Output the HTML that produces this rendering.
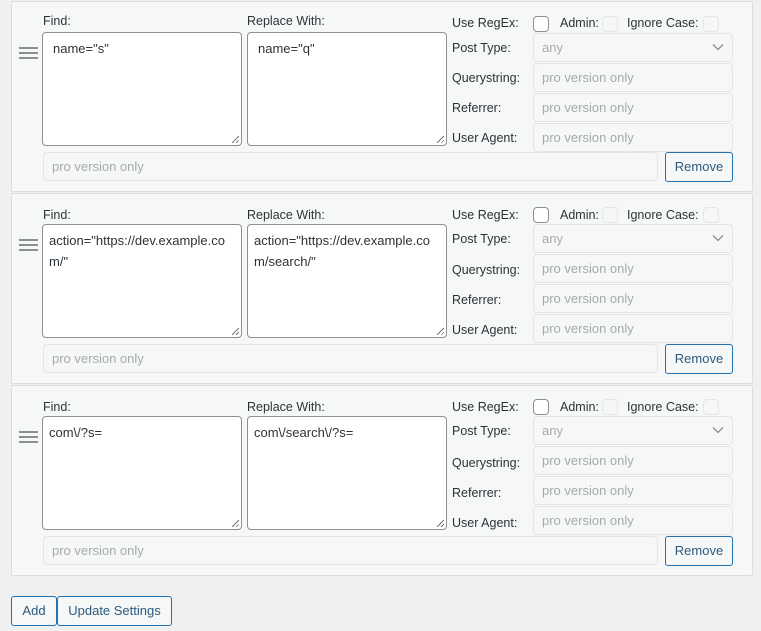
<!DOCTYPE html>
<html><head><style>
*{box-sizing:border-box;margin:0;padding:0}
body{width:761px;height:631px;background:#f0f0f1;font-family:"Liberation Sans",sans-serif;font-size:13px;color:#2c3338;position:relative;overflow:hidden}
.p{position:absolute;left:11px;width:742px;height:191px;background:#f6f7f7;border:1px solid #dcdcde;border-radius:2px}
.lbl{position:absolute;font-size:12.5px;color:#2c3338}
.ta{position:absolute;width:200px;height:114px;background:#fff;border:1px solid #8c8f94;border-radius:4px;padding:5px 6px;font-size:13px;line-height:21px;color:#2c3338;word-break:break-all}
.ta:after{content:"";position:absolute;right:2px;bottom:2px;width:7px;height:7px;background:linear-gradient(135deg,transparent 45%,#777 45%,#777 55%,transparent 55%,transparent 75%,#777 75%,#777 85%,transparent 85%)}
.in{position:absolute;height:29px;background:#f6f7f7;border:1px solid #e4e5e7;border-radius:4px;padding:0 8px;line-height:27px;color:#a7aaad;font-size:13px}
.cb{position:absolute;width:16px;height:16px;border:1px solid #8c8f94;border-radius:4px;background:#fff}
.cbd{position:absolute;width:16px;height:16px;border:1px solid #e4e5e7;border-radius:4px;background:#f6f7f7}
.btn{position:absolute;height:30px;border:1px solid #2271b1;border-radius:3px;background:#f6f7f7;color:#2c5a80;font-size:13px;line-height:28px;text-align:center}
.h{position:absolute;left:7px;width:19px;height:2px;background:#8c8f94}
.chev{position:absolute;right:8px;top:9px}
</style></head><body>
<div class="p" style="top:1px">
 <div class="lbl" style="left:31px;top:12px">Find:</div>
 <div class="lbl" style="left:235px;top:12px">Replace With:</div>
 <div class="h" style="top:45px"></div><div class="h" style="top:50px"></div><div class="h" style="top:55px"></div>
 <div class="ta" style="left:30px;top:30px;padding-left:10px">name="s"</div>
 <div class="ta" style="left:235px;top:30px;padding-left:10px">name="q"</div>
 <div class="lbl" style="left:440px;top:14px">Use RegEx:</div>
 <div class="cb" style="left:521px;top:14px"></div>
 <div class="lbl" style="left:548px;top:14px">Admin:</div>
 <div class="cbd" style="left:590px;top:14px"></div>
 <div class="lbl" style="left:615px;top:14px">Ignore Case:</div>
 <div class="cbd" style="left:691px;top:14px"></div>
 <div class="lbl" style="left:440px;top:39px">Post Type:</div>
 <div class="in" style="left:521px;top:31px;width:200px">any<svg class="chev" width="12" height="8" viewBox="0 0 12 8"><path d="M1 1.5L6 6.5L11 1.5" fill="none" stroke="#8c8f94" stroke-width="1.3"/></svg></div>
 <div class="lbl" style="left:440px;top:69px">Querystring:</div>
 <div class="in" style="left:521px;top:61px;width:200px">pro version only</div>
 <div class="lbl" style="left:440px;top:99px">Referrer:</div>
 <div class="in" style="left:521px;top:91px;width:200px">pro version only</div>
 <div class="lbl" style="left:440px;top:129px">User Agent:</div>
 <div class="in" style="left:521px;top:121px;width:200px">pro version only</div>
 <div class="in" style="left:31px;top:150px;width:615px">pro version only</div>
 <div class="btn" style="left:653px;top:150px;width:68px">Remove</div>
</div>
<div class="p" style="top:193px">
 <div class="lbl" style="left:31px;top:14px">Find:</div>
 <div class="lbl" style="left:235px;top:14px">Replace With:</div>
 <div class="h" style="top:45px"></div><div class="h" style="top:50px"></div><div class="h" style="top:55px"></div>
 <div class="ta" style="left:30px;top:30px">action="https://dev.example.com/"</div>
 <div class="ta" style="left:235px;top:30px">action="https://dev.example.com/search/"</div>
 <div class="lbl" style="left:440px;top:14px">Use RegEx:</div>
 <div class="cb" style="left:521px;top:13px"></div>
 <div class="lbl" style="left:548px;top:14px">Admin:</div>
 <div class="cbd" style="left:590px;top:13px"></div>
 <div class="lbl" style="left:615px;top:14px">Ignore Case:</div>
 <div class="cbd" style="left:691px;top:13px"></div>
 <div class="lbl" style="left:440px;top:38px">Post Type:</div>
 <div class="in" style="left:521px;top:30px;width:200px">any<svg class="chev" width="12" height="8" viewBox="0 0 12 8"><path d="M1 1.5L6 6.5L11 1.5" fill="none" stroke="#8c8f94" stroke-width="1.3"/></svg></div>
 <div class="lbl" style="left:440px;top:69px">Querystring:</div>
 <div class="in" style="left:521px;top:60px;width:200px">pro version only</div>
 <div class="lbl" style="left:440px;top:99px">Referrer:</div>
 <div class="in" style="left:521px;top:90px;width:200px">pro version only</div>
 <div class="lbl" style="left:440px;top:129px">User Agent:</div>
 <div class="in" style="left:521px;top:120px;width:200px">pro version only</div>
 <div class="in" style="left:31px;top:150px;width:615px">pro version only</div>
 <div class="btn" style="left:653px;top:150px;width:68px">Remove</div>
</div>
<div class="p" style="top:385px">
 <div class="lbl" style="left:31px;top:14px">Find:</div>
 <div class="lbl" style="left:235px;top:14px">Replace With:</div>
 <div class="h" style="top:45px"></div><div class="h" style="top:50px"></div><div class="h" style="top:55px"></div>
 <div class="ta" style="left:30px;top:30px">com\/?s=</div>
 <div class="ta" style="left:235px;top:30px">com\/search\/?s=</div>
 <div class="lbl" style="left:440px;top:14px">Use RegEx:</div>
 <div class="cb" style="left:521px;top:13px"></div>
 <div class="lbl" style="left:548px;top:14px">Admin:</div>
 <div class="cbd" style="left:590px;top:13px"></div>
 <div class="lbl" style="left:615px;top:14px">Ignore Case:</div>
 <div class="cbd" style="left:691px;top:13px"></div>
 <div class="lbl" style="left:440px;top:38px">Post Type:</div>
 <div class="in" style="left:521px;top:30px;width:200px">any<svg class="chev" width="12" height="8" viewBox="0 0 12 8"><path d="M1 1.5L6 6.5L11 1.5" fill="none" stroke="#8c8f94" stroke-width="1.3"/></svg></div>
 <div class="lbl" style="left:440px;top:70px">Querystring:</div>
 <div class="in" style="left:521px;top:60px;width:200px">pro version only</div>
 <div class="lbl" style="left:440px;top:100px">Referrer:</div>
 <div class="in" style="left:521px;top:90px;width:200px">pro version only</div>
 <div class="lbl" style="left:440px;top:130px">User Agent:</div>
 <div class="in" style="left:521px;top:120px;width:200px">pro version only</div>
 <div class="in" style="left:31px;top:150px;width:615px">pro version only</div>
 <div class="btn" style="left:653px;top:150px;width:68px">Remove</div>
</div>
<div class="btn" style="left:11px;top:596px;width:46px">Add</div>
<div class="btn" style="left:57px;top:596px;width:115px">Update Settings</div>
</body></html>
